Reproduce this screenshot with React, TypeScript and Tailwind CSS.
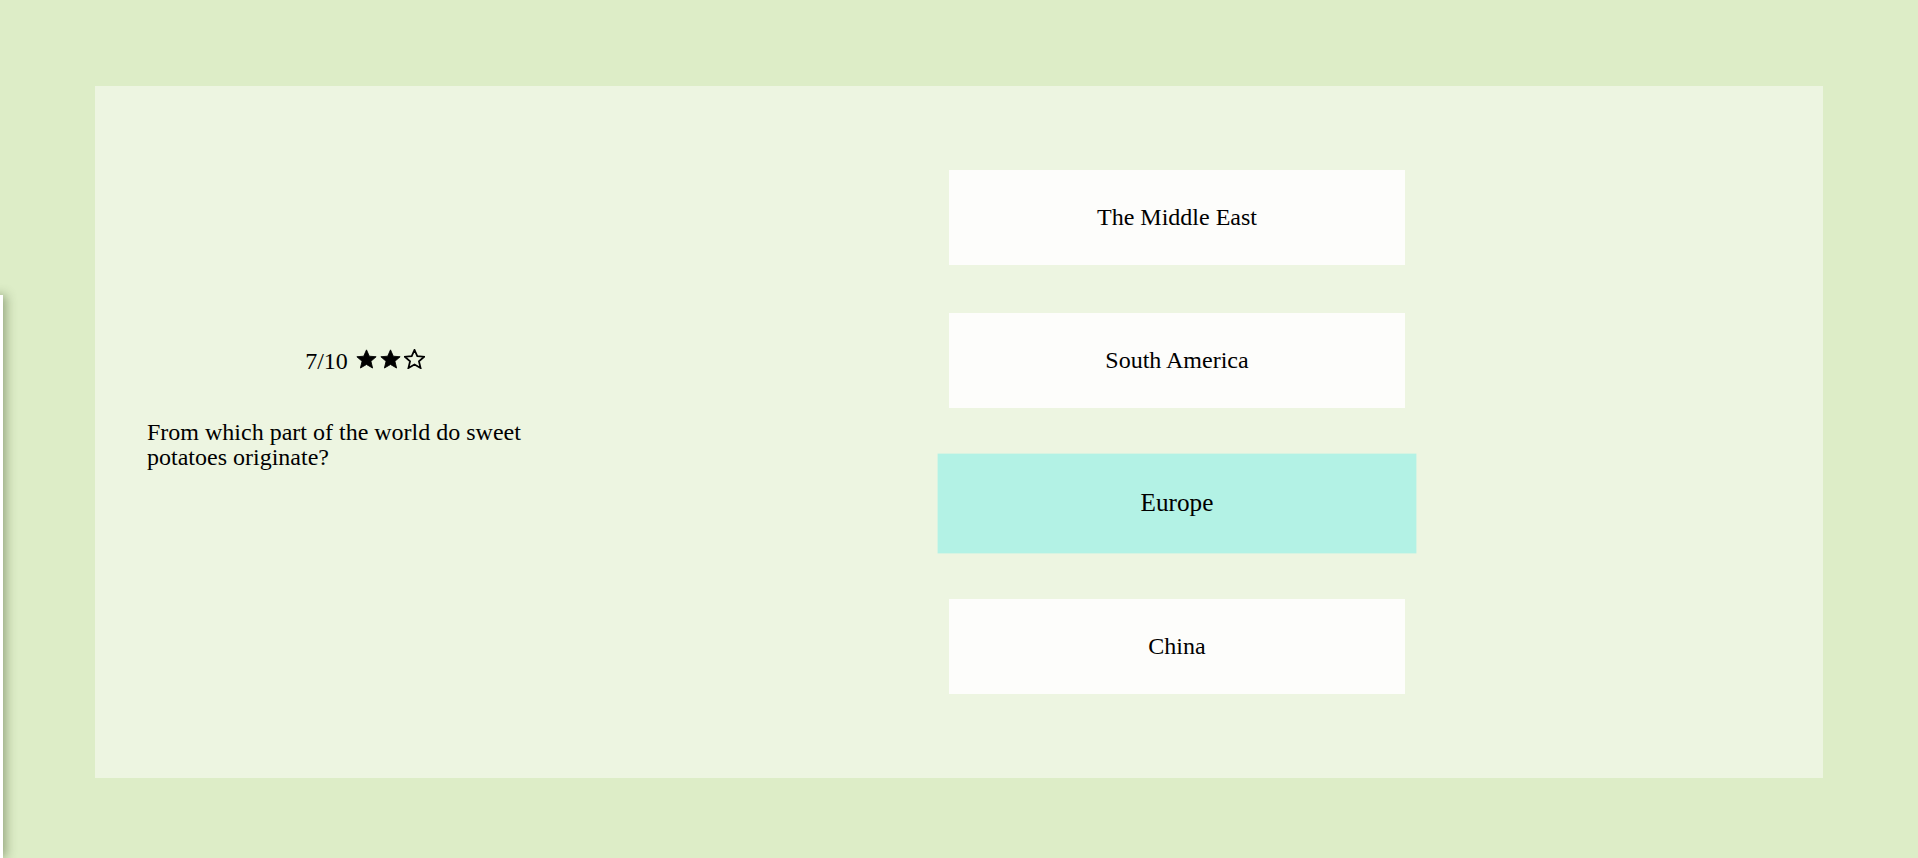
import React from 'react'

const answers = ['The Middle East', 'South America', 'Europe', 'China']

function Star({ filled }: { filled: boolean }) {
  return (
    <svg width="21" height="20" viewBox="0 0 24 23" className="shrink-0">
      <path
        d="M12 1l3.2 7.3 7.9.6-6 5.2 1.9 7.8L12 17.8l-7 4.1 1.9-7.8-6-5.2 7.9-.6z"
        fill={filled ? '#000' : 'none'}
        stroke="#000"
        strokeWidth={filled ? 1 : 2}
        strokeLinejoin="miter"
      />
    </svg>
  )
}

export default function App() {
  const selected = 'Europe'

  return (
    <div
      className="relative h-[858px] bg-[#ddedc7] pt-[86px] px-[95px] overflow-hidden text-black"
      style={{ fontFamily: '"Liberation Serif", "Times New Roman", serif' }}
    >
      <div className="absolute left-[-297px] top-[295px] bottom-0 w-[300px] bg-white shadow-[3px_0_10px_rgba(60,80,40,0.45)]" />

      <div className="h-[692px] bg-[#edf5e1] flex items-center pl-[52px] pr-[52px]">
        <div className="w-[436px] shrink-0 mb-[47px] flex flex-col">
          <div className="flex items-center justify-center gap-[8px] text-[24px] leading-[27px] pt-[1px]">
            <span>7/10</span>
            <span className="flex items-center gap-[3px] -mt-[5px]">
              <Star filled />
              <Star filled />
              <Star filled={false} />
            </span>
          </div>
          <p className="mt-[45px] text-[24px] leading-[25px]">
            From which part of the world do sweet potatoes originate?
          </p>
        </div>

        <div className="flex-1 flex flex-col items-center gap-[48px]">
          {answers.map(a => (
            <button
              key={a}
              className={
                a === selected
                  ? 'w-[456px] h-[95px] bg-[#b3f2e5] text-[24px] scale-105 flex items-center justify-center pb-[2px]'
                  : 'w-[456px] h-[95px] bg-[#fdfdfb] text-[24px] flex items-center justify-center pb-[2px]'
              }
            >
              {a}
            </button>
          ))}
        </div>
      </div>
    </div>
  )
}
